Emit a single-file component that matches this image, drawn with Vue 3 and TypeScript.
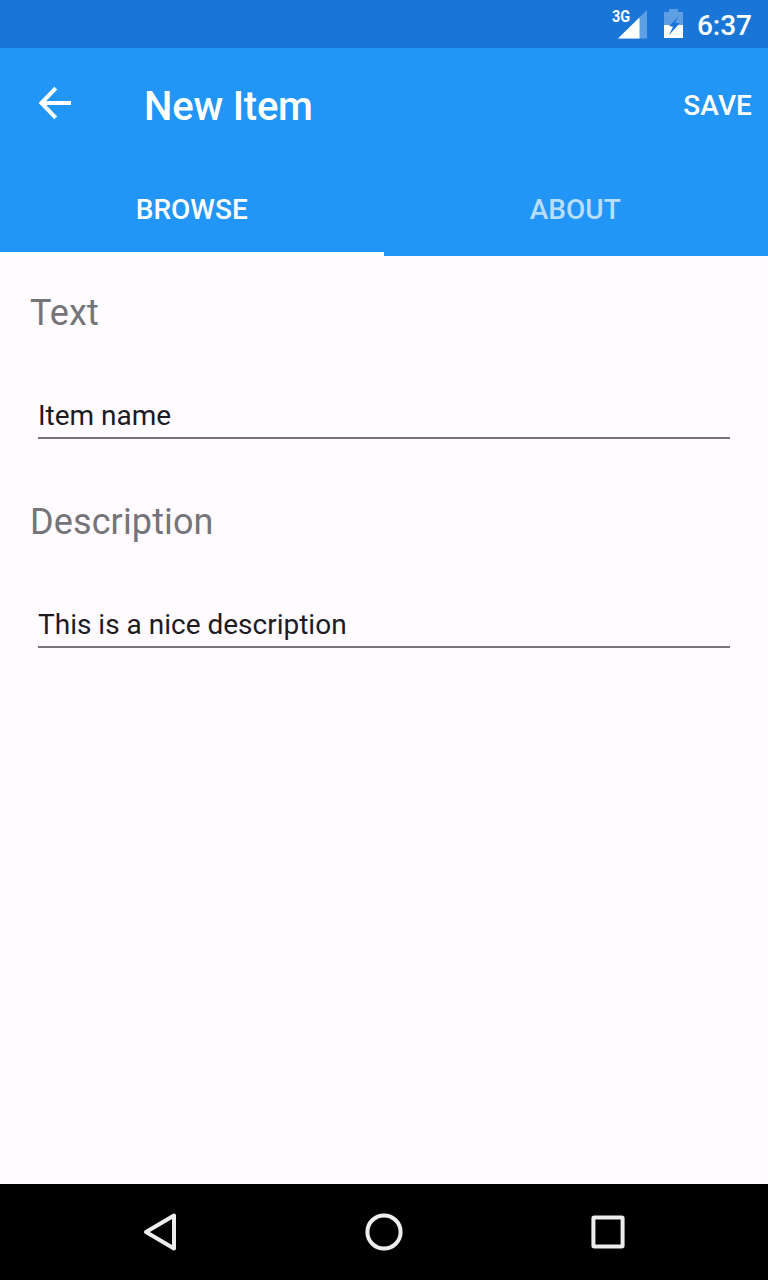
<script setup lang="ts">
import { ref } from 'vue'

interface Field {
  id: string
  label: string
  value: string
}

const tabs: string[] = ['Browse', 'About']
const activeTab = ref<string>('Browse')
const fields = ref<Field[]>([
  { id: 'text', label: 'Text', value: 'Item name' },
  { id: 'description', label: 'Description', value: 'This is a nice description' },
])
</script>

<template>
  <div class="screen">
    <div class="status">
      <span class="network">3G</span>
      <svg class="signal" width="30" height="30" viewBox="0 0 30 30">
        <path d="M30 0V28.5H1Z" fill="#fff" fill-opacity=".3" />
        <path d="M22.5 7.4V28.5H1Z" fill="#fff" />
      </svg>
      <svg class="battery" width="19" height="29" viewBox="0 0 19 29">
        <path d="M0 3H5V0H14V3H19V16H0Z" fill="#fff" fill-opacity=".3" />
        <path d="M0 16H19V29H0Z" fill="#fff" />
        <path d="M14.3 7.7L5 17L9 17.7L4.9 26.3L15.8 14.3L11.3 13.7Z" fill="#1976d7" />
      </svg>
      <span class="clock">6:37</span>
    </div>
    <header class="toolbar">
      <button class="back" type="button" aria-label="Back">
        <svg width="34" height="34" viewBox="0 0 34 34" fill="none" stroke="#fff" stroke-width="4">
          <path d="M33 17H4M17.8 2.2L3.4 17L17.8 31.8" />
        </svg>
      </button>
      <h1 class="title">New Item</h1>
      <button class="save" type="button">SAVE</button>
    </header>
    <nav class="tabs">
      <button
        v-for="tab in tabs"
        :key="tab"
        type="button"
        class="tab"
        :class="{ active: tab === activeTab }"
        @click="activeTab = tab"
      >{{ tab }}</button>
    </nav>
    <main class="form">
      <div v-for="field in fields" :key="field.id" class="field">
        <label class="label" :for="field.id">{{ field.label }}</label>
        <input :id="field.id" v-model="field.value" class="input" type="text" spellcheck="false" />
      </div>
    </main>
    <footer class="navbar">
      <svg width="48" height="48" viewBox="0 0 48 48"><path d="M10 24L38 7.6V40.4Z" /></svg>
      <svg width="48" height="48" viewBox="0 0 48 48"><circle cx="24" cy="24" r="16.6" /></svg>
      <svg width="48" height="48" viewBox="0 0 48 48"><rect x="9.4" y="9.4" width="29.2" height="29.2" rx="1" /></svg>
    </footer>
  </div>
</template>

<style>
body {
  margin: 0;
}
</style>

<style scoped>
.screen {
  display: flex;
  flex-direction: column;
  width: 768px;
  height: 1280px;
  overflow: hidden;
  background: #fffbff;
  font-family: Roboto, "Liberation Sans", sans-serif;
}
svg {
  display: block;
}
button {
  padding: 0;
  border: 0;
  background: none;
  color: #fff;
  font: 500 28px/32px Roboto, "Liberation Sans", sans-serif;
}
.status {
  display: flex;
  box-sizing: border-box;
  height: 48px;
  padding-right: 16px;
  justify-content: flex-end;
  align-items: flex-start;
  background: #1976d7;
  color: #fff;
}
.network {
  margin: 8px -14px 0 0;
  font-size: 16px;
  font-weight: 700;
  line-height: 18px;
  transform: scaleX(.9);
}
.signal {
  margin-top: 10px;
}
.battery {
  margin: 9px 14px 0 17px;
}
.clock {
  margin-top: 10px;
  font-size: 28px;
  font-weight: 500;
  line-height: 32px;
}
.toolbar {
  display: flex;
  box-sizing: border-box;
  height: 112px;
  padding: 0 16px 0 38px;
  align-items: center;
  background: #2196f6;
}
.back {
  margin-top: -2px;
}
.title {
  flex: 1;
  margin: 6px 0 0 72px;
  color: #fff;
  font-size: 40px;
  font-weight: 500;
  line-height: 48px;
  letter-spacing: -.2px;
}
.save {
  margin: 4px 0 0;
  letter-spacing: .1px;
}
.tabs {
  display: flex;
  height: 96px;
  background: #2196f6;
}
.tab {
  box-sizing: border-box;
  flex: 1;
  padding-top: 8px;
  border-bottom: 4px solid transparent;
  color: rgba(255, 255, 255, .7);
  text-transform: uppercase;
}
.tab:last-child {
  padding-right: 1px;
}
.tab.active {
  border-bottom-color: #fff;
  color: #fff;
}
.form {
  display: flex;
  flex: 1;
  flex-direction: column;
  gap: 62px;
  padding: 36px 30px 0;
}
.field {
  display: flex;
  flex-direction: column;
  gap: 60px;
}
.label {
  color: #757478;
  font-size: 36px;
  line-height: 42px;
  letter-spacing: .12px;
}
.input {
  box-sizing: border-box;
  height: 45px;
  margin: 0 8px;
  padding: 0;
  border: 0;
  border-bottom: 2px solid #757478;
  border-radius: 0;
  outline: 0;
  background: transparent;
  color: #1c1b1f;
  font: 400 28px/36px Roboto, "Liberation Sans", sans-serif;
}
.navbar {
  display: flex;
  height: 96px;
  justify-content: center;
  align-items: center;
  gap: 176px;
  background: #000;
}
.navbar svg {
  fill: none;
  stroke: #ededed;
  stroke-width: 4;
  stroke-linejoin: round;
}
</style>
